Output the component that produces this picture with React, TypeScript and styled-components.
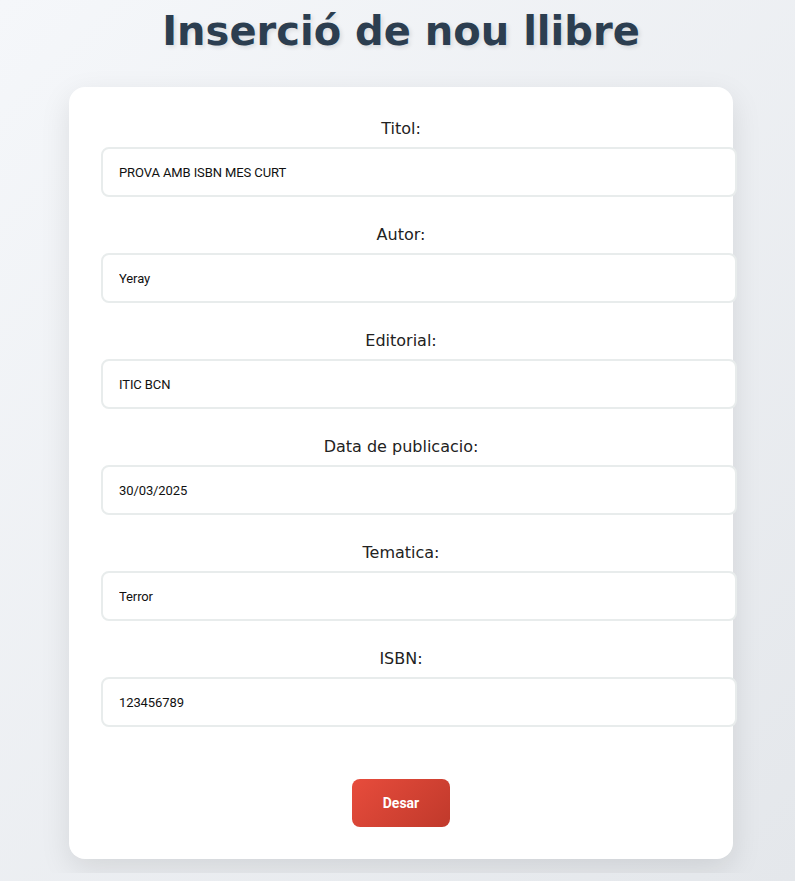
import React from "react";
import styled, { createGlobalStyle } from "styled-components";

const Global = createGlobalStyle`
  html, body { margin: 0; padding: 0; }
  body {
    margin: 8px 8px 8px 15px;
    font-family: "DejaVu Sans", sans-serif;
    background: linear-gradient(135deg, #f5f7fa 0%, #e4e7eb 100%);
    min-height: 865px;
  }
`;

const Title = styled.h1`
  margin: 0 0 32px;
  text-align: center;
  font-family: "DejaVu Sans", sans-serif;
  font-weight: bold;
  font-size: 40px;
  line-height: 47px;
  color: #2c3e50;
  text-shadow: 2px 2px 4px rgba(0, 0, 0, 0.1);
`;

const Card = styled.form`
  width: 600px;
  margin: 0 auto;
  padding: 32px;
  background: #fff;
  border-radius: 16px;
  box-shadow: 0 10px 30px rgba(0, 0, 0, 0.1);
`;

const Group = styled.div`
  margin-bottom: 28px;
`;

const Label = styled.label`
  display: block;
  text-align: center;
  font-family: "DejaVu Sans", sans-serif;
  font-size: 16px;
  line-height: 19px;
  color: #222;
  margin-bottom: 9px;
`;

const Input = styled.input`
  display: block;
  width: 100%;
  padding: 0 16px;
  box-sizing: content-box;
  margin: 0;
  height: 46px;
  border: 2px solid #e8ecec;
  border-radius: 8px;
  font-family: "Roboto", sans-serif;
  font-size: 13px;
  letter-spacing: -0.1px;
  color: #111;
  background: #fff;
  outline: none;
`;

const Actions = styled.div`
  display: flex;
  justify-content: center;
  padding-top: 24px;
`;

const Button = styled.button`
  width: 98px;
  height: 48px;
  border: none;
  border-radius: 8px;
  background: linear-gradient(135deg, #e74c3c 0%, #c0392b 100%);
  color: #fff;
  font-family: "Roboto", sans-serif;
  font-weight: bold;
  font-size: 14px;
  cursor: pointer;
`;

const fields: [string, string][] = [
  ["Titol:", "PROVA AMB ISBN MES CURT"],
  ["Autor:", "Yeray"],
  ["Editorial:", "ITIC BCN"],
  ["Data de publicacio:", "30/03/2025"],
  ["Tematica:", "Terror"],
  ["ISBN:", "123456789"],
];

export default function App() {
  return (
    <>
      <Global />
      <Title>Inserció de nou llibre</Title>
      <Card onSubmit={(e) => e.preventDefault()}>
        {fields.map(([l, v]) => (
          <Group key={l}>
            <Label>{l}</Label>
            <Input defaultValue={v} />
          </Group>
        ))}
        <Actions>
          <Button type="submit">Desar</Button>
        </Actions>
      </Card>
    </>
  );
}
